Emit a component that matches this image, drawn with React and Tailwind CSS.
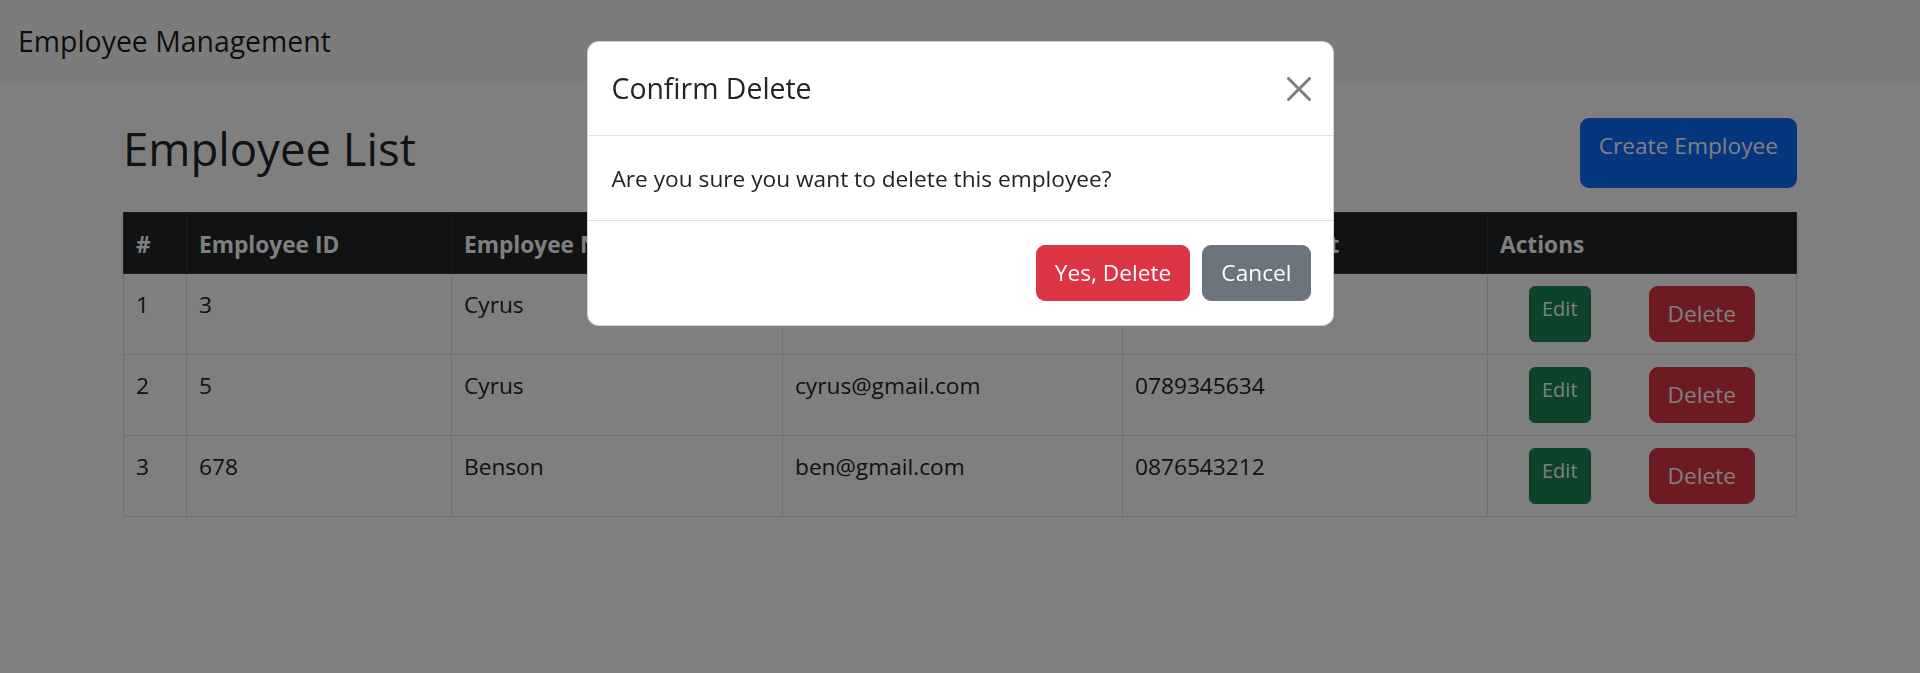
import React from 'react';

const employees = [
  { id: 3, name: 'Cyrus', email: 'cyrus@gmail.com', contact: '0712345678' },
  { id: 5, name: 'Cyrus', email: 'cyrus@gmail.com', contact: '0789345634' },
  { id: 678, name: 'Benson', email: 'ben@gmail.com', contact: '0876543212' },
];

const CloseIcon = () => (
  <svg width="24" height="24" viewBox="0 0 16 16" className="block opacity-50">
    <path
      fill="#000"
      d="M.293.293a1 1 0 0 1 1.414 0L8 6.586 14.293.293a1 1 0 1 1 1.414 1.414L9.414 8l6.293 6.293a1 1 0 0 1-1.414 1.414L8 9.414l-6.293 6.293a1 1 0 0 1-1.414-1.414L6.586 8 .293 1.707a1 1 0 0 1 0-1.414z"
    />
  </svg>
);

const App = () => {
  return (
    <div className="min-h-screen bg-white font-['Segoe_UI','Open_Sans',sans-serif] text-[22.7px] leading-[36px] text-[#212529]">
      {/* navbar */}
      <nav className="h-[82px] bg-[#f8f9fa] flex items-center px-[18px]">
        <a className="text-[28.4px] leading-[45px] text-black/90">Employee Management</a>
      </nav>

      <div className="w-[1710px] mx-auto px-[18px] mt-[36px]">
        <div className="flex items-start justify-between">
          <h2 className="mt-[2px] text-[45.5px] leading-[57.6px] font-normal">Employee List</h2>
          <button className="h-[70px] flex items-start pt-[9px] px-[18px] rounded-[9px] bg-[#0d6efd] border border-[#0d6efd] text-white text-[22.7px]">
            Create Employee
          </button>
        </div>

        <table className="mt-[24px] w-full table-fixed border-collapse border border-[#dee2e6]">
          <thead>
            <tr className="bg-[#212529] text-white">
              <th className="w-[63px] px-[12px] pt-[14px] pb-[10px] text-left font-bold border border-[#373b3e]">#</th>
              <th className="w-[265px] px-[12px] pt-[14px] pb-[10px] text-left font-bold border border-[#373b3e]">Employee ID</th>
              <th className="w-[331px] px-[12px] pt-[14px] pb-[10px] text-left font-bold border border-[#373b3e]">Employee Name</th>
              <th className="w-[340px] px-[12px] pt-[14px] pb-[10px] text-left font-bold border border-[#373b3e]">Employee Email</th>
              <th className="w-[365px] px-[12px] pt-[14px] pb-[10px] text-left font-bold border border-[#373b3e]">Employee Contact</th>
              <th className="px-[12px] pt-[14px] pb-[10px] text-left font-bold border border-[#373b3e]">Actions</th>
            </tr>
          </thead>
          <tbody>
            {employees.map((e, i) => (
              <tr key={i}>
                <td className="px-[12px] pt-[13px] pb-[11px] align-top border border-[#dee2e6]">{i + 1}</td>
                <td className="px-[12px] pt-[13px] pb-[11px] align-top border border-[#dee2e6]">{e.id}</td>
                <td className="px-[12px] pt-[13px] pb-[11px] align-top border border-[#dee2e6]">{e.name}</td>
                <td className="px-[12px] pt-[13px] pb-[11px] align-top border border-[#dee2e6]">{e.email}</td>
                <td className="px-[12px] pt-[13px] pb-[11px] align-top border border-[#dee2e6]">{e.contact}</td>
                <td className="p-[12px] align-top border border-[#dee2e6]">
                  <div className="flex justify-around">
                    <a className="px-[12px] py-[6px] rounded-[6px] bg-[#198754] border border-[#198754] text-white text-[20px] leading-[31.5px]">
                      Edit
                    </a>
                    <button className="h-[56px] px-[18px] rounded-[9px] bg-[#dc3545] border border-[#dc3545] text-white text-[22.7px]">
                      Delete
                    </button>
                  </div>
                </td>
              </tr>
            ))}
          </tbody>
        </table>
      </div>

      {/* modal */}
      <div className="fixed inset-0 bg-black/50">
        <div className="w-[747px] mx-auto mt-[41px] bg-white rounded-[12px] border border-black/[0.175]">
          <div className="flex items-center justify-between pl-[24px] pr-[22px] py-[24px] border-b border-[#dee2e6]">
            <h5 className="text-[28.4px] leading-[45px] font-normal">Confirm Delete</h5>
            <button className="p-0">
              <CloseIcon />
            </button>
          </div>
          <div className="px-[24px] pt-[25px] pb-[23px]">Are you sure you want to delete this employee?</div>
          <div className="flex justify-end gap-[12px] p-[24px] pr-[22px] border-t border-[#dee2e6]">
            <button className="h-[56px] px-[18px] rounded-[9px] bg-[#dc3545] border border-[#dc3545] text-white">
              Yes, Delete
            </button>
            <button className="h-[56px] px-[18px] rounded-[9px] bg-[#6c757d] border border-[#6c757d] text-white">
              Cancel
            </button>
          </div>
        </div>
      </div>
    </div>
  );
};

export default App;
